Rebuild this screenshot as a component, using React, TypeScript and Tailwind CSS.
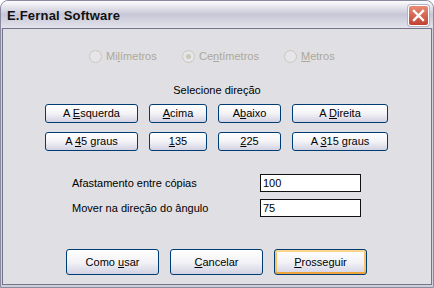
import React from 'react';

const FONT = { fontFamily: '"Liberation Sans", Arial, sans-serif' };

function Radio({ label, checked, width }: { label: [string, string, string]; checked?: boolean; width?: string }) {
  return (
    <div className={`flex items-center gap-[4px] ${width ?? ''}`}>
      <div className="w-[13px] h-[13px] rounded-full border border-[#cac8bb] bg-[#e6e5e9] flex items-center justify-center">
        {checked && <div className="w-[5px] h-[5px] rounded-full bg-[#cac8bb]" />}
      </div>
      <span className="text-[11px] leading-[13px] text-[#aca899]">
        {label[0]}
        <u>{label[1]}</u>
        {label[2]}
      </span>
    </div>
  );
}

function Btn({ w, h = 'h-[19px]', parts, def }: { w: string; h?: string; parts: [string, string, string]; def?: boolean }) {
  return (
    <div
      className={`${w} ${h} rounded-[3px] border border-[#003c74] bg-linear-to-b from-white via-[#f3f3f7] to-[#d3d2e2] flex items-center justify-center text-[11px] text-black ${
        def ? 'shadow-[inset_0_-2px_0_#eea43a,inset_0_2px_0_#fcd68c,inset_2px_0_0_#f8c466,inset_-2px_0_0_#f8c466]' : ''
      }`}
    >
      <span>
        {parts[0]}
        <u>{parts[1]}</u>
        {parts[2]}
      </span>
    </div>
  );
}

function Field({ label, value }: { label: string; value: string }) {
  return (
    <div className="flex items-center pl-[69px]">
      <span className="w-[188px] text-[11px] text-black">{label}</span>
      <div className="w-[101px] h-[18px] border border-[#111] bg-white flex items-center pl-[2px] text-[11px] text-black">
        {value}
      </div>
    </div>
  );
}

export default function App() {
  return (
    <div className="w-[434px] h-[288px] bg-white" style={FONT}>
      <div className="w-[434px] h-[288px] rounded-t-[8px] border border-[#8a8aa0] bg-[#cfcfdb] flex flex-col overflow-hidden">
        {/* title bar */}
        <div className="h-[27px] shrink-0 flex items-start justify-between pl-[6px] pr-[4px] bg-linear-to-b from-[#fdfdfe] via-[#c8c7d7] to-[#e3e3ec]">
          <span className="mt-[7px] text-[13px] leading-[16px] font-bold text-[#111] tracking-[0.2px]">E.Fernal Software</span>
          <div className="mt-[4px] w-[21px] h-[21px] rounded-[3px] border border-white bg-linear-to-b from-[#e88a74] to-[#c13f32] flex items-center justify-center shadow-[0_0_0_1px_#b4b4c4]">
            <svg width="13" height="13" viewBox="0 0 13 13">
              <path d="M2 2 L11 11 M11 2 L2 11" stroke="white" strokeWidth="2.4" strokeLinecap="square" />
            </svg>
          </div>
        </div>
        {/* client */}
        <div className="flex-1 mx-[1px] mb-[2px] border border-[#74748a] bg-[#e0dfe3] flex flex-col">
          <div className="mt-[21px] flex items-center pl-[86px] h-[13px]">
            <Radio width="w-[93px]" label={['Mi', 'l', 'ímetros']} />
            <Radio width="w-[102px]" label={['Ce', 'n', 'tímetros']} checked />
            <Radio label={['', 'M', 'etros']} />
          </div>
          <div className="mt-[21px] h-[13px] leading-[13px] text-center text-[11px] text-black">Selecione direção</div>
          <div className="mt-[7px] flex gap-[11px] pl-[42px]">
            <Btn w="w-[93px]" parts={['A ', 'E', 'squerda']} />
            <Btn w="w-[58px]" parts={['', 'A', 'cima']} />
            <Btn w="w-[63px]" parts={['A', 'b', 'aixo']} />
            <Btn w="w-[96px]" parts={['A ', 'D', 'ireita']} />
          </div>
          <div className="mt-[9px] flex gap-[11px] pl-[42px]">
            <Btn w="w-[93px]" parts={['A ', '4', '5 graus']} />
            <Btn w="w-[58px]" parts={['', '1', '35']} />
            <Btn w="w-[63px]" parts={['', '2', '25']} />
            <Btn w="w-[96px]" parts={['A ', '3', '15 graus']} />
          </div>
          <div className="mt-[23px]">
            <Field label="Afastamento entre cópias" value="100" />
          </div>
          <div className="mt-[7px]">
            <Field label="Mover na direção do ângulo" value="75" />
          </div>
          <div className="mt-[32px] flex gap-[11px] pl-[63px]">
            <Btn w="w-[93px]" h="h-[26px]" parts={['Como ', 'u', 'sar']} />
            <Btn w="w-[93px]" h="h-[26px]" parts={['', 'C', 'ancelar']} />
            <Btn w="w-[93px]" h="h-[26px]" parts={['', 'P', 'rosseguir']} def />
          </div>
        </div>
      </div>
    </div>
  );
}
